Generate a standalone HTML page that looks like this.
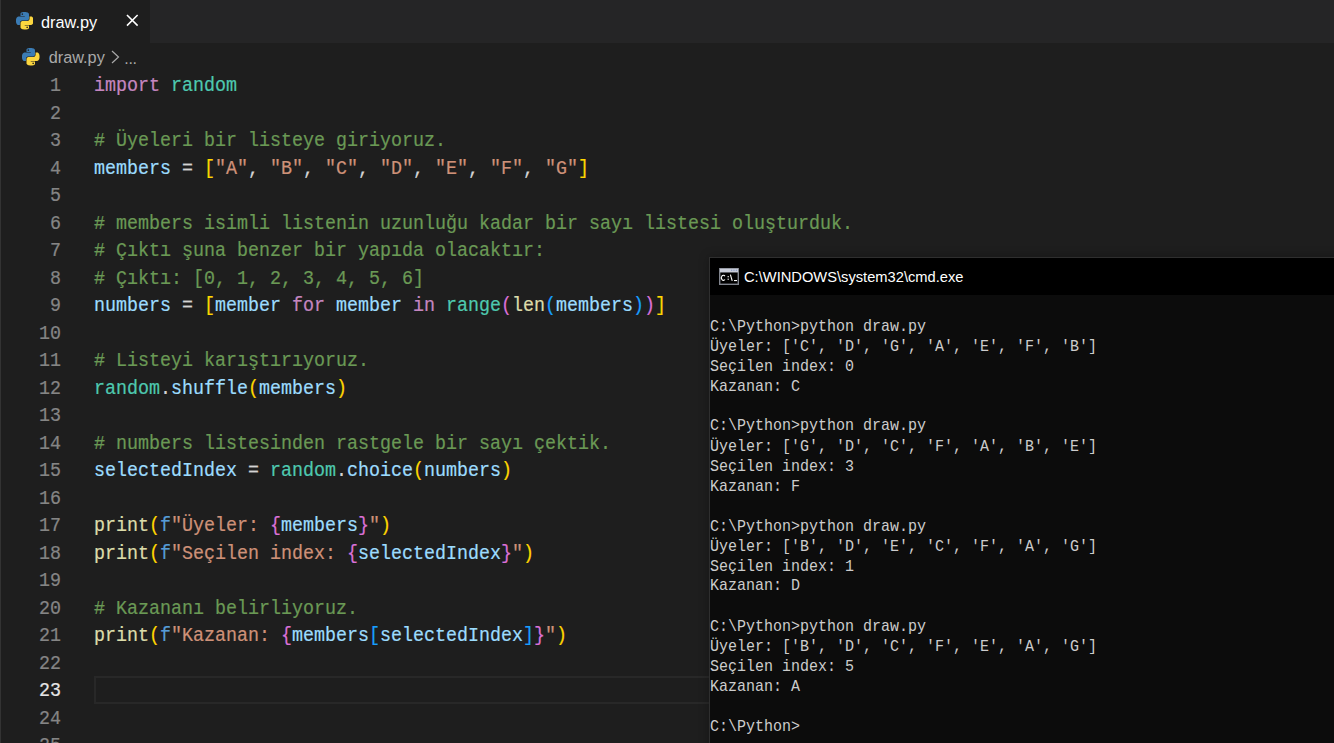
<!DOCTYPE html>
<html>
<head>
<meta charset="utf-8">
<title>draw.py</title>
<style>
*{margin:0;padding:0;box-sizing:border-box;}
html,body{width:1334px;height:743px;overflow:hidden;background:#1e1e1e;}
body{position:relative;font-family:"Liberation Sans",sans-serif;}
#leftedge{position:absolute;left:0;top:0;width:1px;height:743px;background:#333333;}
#tabbar{position:absolute;left:1px;top:0;width:1333px;height:43px;background:#252526;}
#tab{position:absolute;left:0;top:0;width:149px;height:43px;background:#1e1e1e;}
#tab .lbl{position:absolute;left:40px;top:12px;font-size:16.3px;line-height:20px;color:#ffffff;white-space:pre;}
.pyico{position:absolute;width:17.5px;height:17.5px;}
#tab .x{position:absolute;left:125px;top:14.2px;width:12.6px;height:12.6px;}
#crumbs{position:absolute;left:1px;top:43px;width:1333px;height:28px;background:#1e1e1e;}
#crumbs .lbl{position:absolute;left:47.7px;top:4px;font-size:16.3px;line-height:20px;color:#a9a9a9;white-space:pre;}
#crumbs .chev{position:absolute;left:109px;top:7px;width:10px;height:14px;}
#crumbs .dots{position:absolute;left:123.3px;letter-spacing:-0.3px;top:6px;font-size:16px;line-height:20px;color:#a9a9a9;}
#editor{position:absolute;left:0;top:71px;width:1334px;height:672px;font-family:"Liberation Mono",monospace;font-size:18.33px;}
.ln,.cl{transform:scaleY(1.08);transform-origin:0 18.64px;-webkit-text-stroke:0.2px;}
.ln{position:absolute;left:0;width:61px;height:27.5px;line-height:27.5px;text-align:right;color:#858585;white-space:pre;}
.ln.act{color:#e4e4e4;}
.cl{position:absolute;left:94px;height:27.5px;line-height:27.5px;color:#d4d4d4;white-space:pre;}
#curline{position:absolute;left:94px;top:605px;width:1240px;height:28px;border:2px solid #282828;}
.k{color:#c586c0}.t{color:#4ec9b0}.c{color:#6a9955}.v{color:#9cdcfe}.s{color:#ce9178}
.f{color:#dcdcaa}.b1{color:#ffd700}.b2{color:#da70d6}.b3{color:#179fff}.kb{color:#569cd6}.n{color:#b5cea8}
#cmd{position:absolute;left:709px;top:257px;width:640px;height:500px;background:#0c0c0c;border:1px solid #2f2f2f;box-shadow:0 0 10px rgba(0,0,0,0.28);}
#cmd .title{position:absolute;left:0;top:0;width:100%;height:37px;background:#000000;}
#cmd .title .txt{position:absolute;left:34px;top:9.6px;font-size:14.7px;line-height:18px;color:#ffffff;white-space:pre;}
#cmd .ico{position:absolute;left:9px;top:10px;width:20px;height:17px;}
#cmd .out{position:absolute;left:0;top:60px;font-family:"Liberation Mono",monospace;font-size:15px;line-height:18.868px;color:#cccccc;white-space:pre;transform:scaleY(1.06);transform-origin:0 0;}
</style>
</head>
<body>
<div id="leftedge"></div>
<div id="tabbar">
  <div id="tab">
    <svg class="pyico" style="left:14.85px;top:12.1px" viewBox="0 0 24 24"><path fill="#3b7cb5" d="M14.25.18l.9.2.73.26.59.3.45.32.34.34.25.34.16.33.1.3.04.26.02.2-.01.13V8.5l-.05.63-.13.55-.21.46-.26.38-.3.31-.33.25-.35.19-.35.14-.33.1-.3.07-.26.04-.21.02H8.77l-.69.05-.59.14-.5.22-.41.27-.33.32-.27.35-.2.36-.15.37-.1.35-.07.32-.04.27-.02.21v3.06H3.170l-.21-.03-.28-.07-.32-.12-.35-.18-.36-.26-.36-.36-.35-.46-.32-.59-.28-.73-.21-.88-.14-1.05-.05-1.23.06-1.22.16-1.04.24-.87.32-.71.36-.57.4-.44.42-.33.42-.24.4-.16.36-.1.32-.05.24-.01h.16l.06.01h8.16v-.83H6.180l-.01-2.75-.02-.37.05-.34.11-.31.17-.28.25-.26.31-.23.38-.2.44-.18.51-.15.58-.12.64-.1.71-.06.77-.04.84-.02 1.27.05zm-6.3 1.98l-.23.33-.08.41.08.41.23.34.33.22.41.09.41-.09.33-.22.23-.34.08-.41-.08-.41-.23-.33-.33-.22-.41-.09-.41.09z"/><path fill="#fbd63f" d="M21.04 6.11l.28.06.32.12.35.18.36.27.36.35.35.47.32.59.28.73.21.88.14 1.04.05 1.23-.06 1.23-.16 1.04-.24.86-.32.71-.36.57-.4.45-.42.33-.42.24-.4.16-.36.09-.32.05-.24.02-.16-.01h-8.22v.82h5.84l.01 2.76.02.36-.05.34-.11.31-.17.29-.25.25-.31.24-.38.2-.44.17-.51.15-.58.13-.64.09-.71.07-.77.04-.84.01-1.27-.04-1.07-.14-.9-.2-.73-.25-.59-.3-.45-.33-.34-.34-.25-.34-.16-.33-.1-.3-.04-.25-.02-.2.01-.13v-5.34l.05-.64.13-.54.21-.46.26-.38.3-.32.33-.24.35-.2.35-.14.33-.1.3-.06.26-.04.21-.02.13-.01h5.84l.69-.05.59-.14.5-.21.41-.28.33-.32.27-.35.2-.36.15-.36.1-.35.07-.32.04-.28.02-.21V6.07h2.09l.14.01zm-6.47 14.25l-.23.33-.08.41.08.41.23.33.33.23.41.08.41-.08.33-.23.23-.33.08-.41-.08-.41-.23-.33-.33-.23-.41-.08-.41.08z"/></svg>
    <div class="lbl">draw.py</div>
    <svg class="x" viewBox="0 0 13 13"><path d="M1 1L12 12M12 1L1 12" stroke="#ffffff" stroke-width="1.6" fill="none"/></svg>
  </div>
</div>
<div id="crumbs">
  <svg class="pyico" style="left:21.3px;top:5px" viewBox="0 0 24 24"><path fill="#3b7cb5" d="M14.25.18l.9.2.73.26.59.3.45.32.34.34.25.34.16.33.1.3.04.26.02.2-.01.13V8.5l-.05.63-.13.55-.21.46-.26.38-.3.31-.33.25-.35.19-.35.14-.33.1-.3.07-.26.04-.21.02H8.77l-.69.05-.59.14-.5.22-.41.27-.33.32-.27.35-.2.36-.15.37-.1.35-.07.32-.04.27-.02.21v3.06H3.170l-.21-.03-.28-.07-.32-.12-.35-.18-.36-.26-.36-.36-.35-.46-.32-.59-.28-.73-.21-.88-.14-1.05-.05-1.23.06-1.22.16-1.04.24-.87.32-.71.36-.57.4-.44.42-.33.42-.24.4-.16.36-.1.32-.05.24-.01h.16l.06.01h8.16v-.83H6.180l-.01-2.75-.02-.37.05-.34.11-.31.17-.28.25-.26.31-.23.38-.2.44-.18.51-.15.58-.12.64-.1.71-.06.77-.04.84-.02 1.27.05zm-6.3 1.98l-.23.33-.08.41.08.41.23.34.33.22.41.09.41-.09.33-.22.23-.34.08-.41-.08-.41-.23-.33-.33-.22-.41-.09-.41.09z"/><path fill="#fbd63f" d="M21.04 6.11l.28.06.32.12.35.18.36.27.36.35.35.47.32.59.28.73.21.88.14 1.04.05 1.23-.06 1.23-.16 1.04-.24.86-.32.71-.36.57-.4.45-.42.33-.42.24-.4.16-.36.09-.32.05-.24.02-.16-.01h-8.22v.82h5.84l.01 2.76.02.36-.05.34-.11.31-.17.29-.25.25-.31.24-.38.2-.44.17-.51.15-.58.13-.64.09-.71.07-.77.04-.84.01-1.27-.04-1.07-.14-.9-.2-.73-.25-.59-.3-.45-.33-.34-.34-.25-.34-.16-.33-.1-.3-.04-.25-.02-.2.01-.13v-5.34l.05-.64.13-.54.21-.46.26-.38.3-.32.33-.24.35-.2.35-.14.33-.1.3-.06.26-.04.21-.02.13-.01h5.84l.69-.05.59-.14.5-.21.41-.28.33-.32.27-.35.2-.36.15-.36.1-.35.07-.32.04-.28.02-.21V6.07h2.09l.14.01zm-6.47 14.25l-.23.33-.08.41.08.41.23.33.33.23.41.08.41-.08.33-.23.23-.33.08-.41-.08-.41-.23-.33-.33-.23-.41-.08-.41.08z"/></svg>
  <div class="lbl">draw.py</div>
  <svg class="chev" viewBox="0 0 10 14"><path d="M2 1L8.5 7L2 13" stroke="#a9a9a9" stroke-width="1.2" fill="none"/></svg>
  <div class="dots">...</div>
</div>
<div id="editor">
<!--LINES-->
<div id="curline"></div>
<div class="ln" style="top:2.20px">1</div>
<div class="cl" style="top:2.20px"><span class="k">import</span> <span class="t">random</span></div>
<div class="ln" style="top:29.70px">2</div>
<div class="ln" style="top:57.20px">3</div>
<div class="cl" style="top:57.20px"><span class="c"># Üyeleri bir listeye giriyoruz.</span></div>
<div class="ln" style="top:84.70px">4</div>
<div class="cl" style="top:84.70px"><span class="v">members</span> = <span class="b1">[</span><span class="s">"A"</span>, <span class="s">"B"</span>, <span class="s">"C"</span>, <span class="s">"D"</span>, <span class="s">"E"</span>, <span class="s">"F"</span>, <span class="s">"G"</span><span class="b1">]</span></div>
<div class="ln" style="top:112.20px">5</div>
<div class="ln" style="top:139.70px">6</div>
<div class="cl" style="top:139.70px"><span class="c"># members isimli listenin uzunluğu kadar bir sayı listesi oluşturduk.</span></div>
<div class="ln" style="top:167.20px">7</div>
<div class="cl" style="top:167.20px"><span class="c"># Çıktı şuna benzer bir yapıda olacaktır:</span></div>
<div class="ln" style="top:194.70px">8</div>
<div class="cl" style="top:194.70px"><span class="c"># Çıktı: [0, 1, 2, 3, 4, 5, 6]</span></div>
<div class="ln" style="top:222.20px">9</div>
<div class="cl" style="top:222.20px"><span class="v">numbers</span> = <span class="b1">[</span><span class="v">member</span> <span class="k">for</span> <span class="v">member</span> <span class="k">in</span> <span class="t">range</span><span class="b2">(</span><span class="f">len</span><span class="b3">(</span><span class="v">members</span><span class="b3">)</span><span class="b2">)</span><span class="b1">]</span></div>
<div class="ln" style="top:249.70px">10</div>
<div class="ln" style="top:277.20px">11</div>
<div class="cl" style="top:277.20px"><span class="c"># Listeyi karıştırıyoruz.</span></div>
<div class="ln" style="top:304.70px">12</div>
<div class="cl" style="top:304.70px"><span class="t">random</span>.<span class="v">shuffle</span><span class="b1">(</span><span class="v">members</span><span class="b1">)</span></div>
<div class="ln" style="top:332.20px">13</div>
<div class="ln" style="top:359.70px">14</div>
<div class="cl" style="top:359.70px"><span class="c"># numbers listesinden rastgele bir sayı çektik.</span></div>
<div class="ln" style="top:387.20px">15</div>
<div class="cl" style="top:387.20px"><span class="v">selectedIndex</span> = <span class="t">random</span>.<span class="v">choice</span><span class="b1">(</span><span class="v">numbers</span><span class="b1">)</span></div>
<div class="ln" style="top:414.70px">16</div>
<div class="ln" style="top:442.20px">17</div>
<div class="cl" style="top:442.20px"><span class="f">print</span><span class="b1">(</span><span class="kb">f</span><span class="s">"Üyeler: </span><span class="b2">{</span><span class="v">members</span><span class="b2">}</span><span class="s">"</span><span class="b1">)</span></div>
<div class="ln" style="top:469.70px">18</div>
<div class="cl" style="top:469.70px"><span class="f">print</span><span class="b1">(</span><span class="kb">f</span><span class="s">"Seçilen index: </span><span class="b2">{</span><span class="v">selectedIndex</span><span class="b2">}</span><span class="s">"</span><span class="b1">)</span></div>
<div class="ln" style="top:497.20px">19</div>
<div class="ln" style="top:524.70px">20</div>
<div class="cl" style="top:524.70px"><span class="c"># Kazananı belirliyoruz.</span></div>
<div class="ln" style="top:552.20px">21</div>
<div class="cl" style="top:552.20px"><span class="f">print</span><span class="b1">(</span><span class="kb">f</span><span class="s">"Kazanan: </span><span class="b2">{</span><span class="v">members</span><span class="b3">[</span><span class="v">selectedIndex</span><span class="b3">]</span><span class="b2">}</span><span class="s">"</span><span class="b1">)</span></div>
<div class="ln" style="top:579.70px">22</div>
<div class="ln act" style="top:607.20px">23</div>
<div class="ln" style="top:634.70px">24</div>
<div class="ln" style="top:662.20px">25</div>
<!--/LINES-->
</div>
<div id="cmd">
  <div class="title">
    <svg class="ico" viewBox="0 0 20 17"><rect x="0" y="0" width="20" height="17" fill="#80848d"/><rect x="1" y="0.7" width="18" height="3.6" fill="#c9cdd9"/><rect x="12" y="1.7" width="1.2" height="1.2" fill="#8da0c8"/><rect x="14.4" y="1.7" width="1.2" height="1.2" fill="#8da0c8"/><rect x="16.8" y="1.7" width="1.2" height="1.2" fill="#8da0c8"/><rect x="1.4" y="4.6" width="17.2" height="11" fill="#000"/><path d="M5.9 8.1A2 2.6 0 1 0 5.9 11.5" stroke="#fff" stroke-width="1.1" fill="none"/><rect x="8.6" y="8" width="1.2" height="1.3" fill="#e8e8e8"/><rect x="8.6" y="10.6" width="1.2" height="1.3" fill="#e8e8e8"/><path d="M11.4 6.6L13.2 12.8" stroke="#fff" stroke-width="1.1" fill="none"/><rect x="15" y="12" width="3" height="1.1" fill="#fff"/></svg>
    <div class="txt">C:\WINDOWS\system32\cmd.exe</div>
  </div>
<div class="out">C:\Python&gt;python draw.py
Üyeler: ['C', 'D', 'G', 'A', 'E', 'F', 'B']
Seçilen index: 0
Kazanan: C

C:\Python&gt;python draw.py
Üyeler: ['G', 'D', 'C', 'F', 'A', 'B', 'E']
Seçilen index: 3
Kazanan: F

C:\Python&gt;python draw.py
Üyeler: ['B', 'D', 'E', 'C', 'F', 'A', 'G']
Seçilen index: 1
Kazanan: D

C:\Python&gt;python draw.py
Üyeler: ['B', 'D', 'C', 'F', 'E', 'A', 'G']
Seçilen index: 5
Kazanan: A

C:\Python&gt;</div>
</div>
</body>
</html>
